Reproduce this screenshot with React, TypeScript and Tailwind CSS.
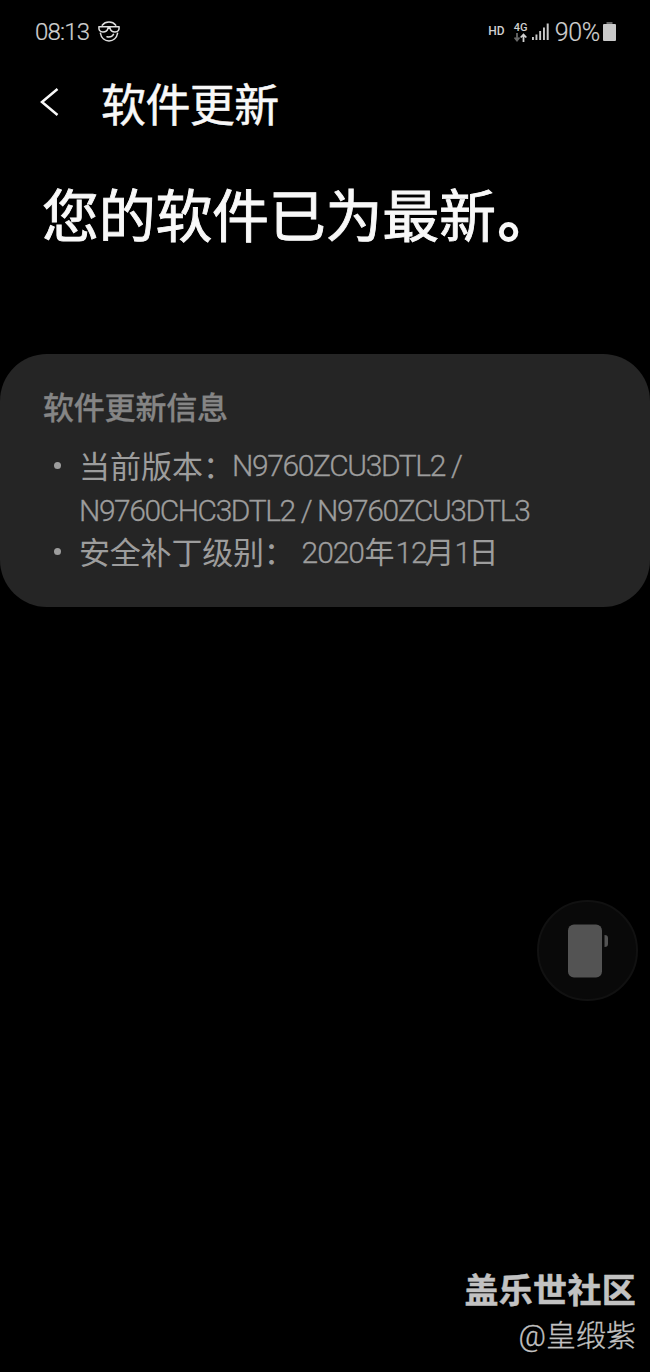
import type { ReactNode } from "react";

function Row({ children, bullet }: { children: ReactNode; bullet: string }) {
  return (
    <li className="flex">
      <span className={`mr-[18px] size-[7px] shrink-0 rounded-full bg-[#9d9d9d] ${bullet}`} />
      <div>{children}</div>
    </li>
  );
}

function CoolFace() {
  return (
    <svg width="22" height="22" viewBox="0 0 22 22" fill="none" stroke="#e0e0e0" strokeWidth="1.5" strokeLinecap="round">
      <path d="M4.2 4.2C7.500 0 14.500 0 17.800 4.200" />
      <path d="M2.400 12.200C4 22.500 18 22.500 19.600 12.200" />
      <path d="M1 5.800H21C21.500 9 20 11 17 11C13.800 11 12.500 9 12 7.200H10C9.500 9 8.200 11 5 11C2 11 0.500 9 1 5.800Z" />
      <path d="M9 15.800C12 16.300 14.500 15.200 15.500 13.300" />
    </svg>
  );
}

function Signal() {
  return (
    <svg width="17" height="18" viewBox="0 0 17 18" fill="#c9c9c9">
      <rect x="0" y="14" width="1.900" height="3" />
      <rect x="3.500" y="11.500" width="1.900" height="5.500" />
      <rect x="7.200" y="8" width="1.900" height="9" />
      <rect x="11" y="4.500" width="1.900" height="12.500" />
      <rect x="14.700" y="0.500" width="2" height="16.500" />
    </svg>
  );
}

export default function App() {
  return (
    <main className="flex h-[1372px] w-[650px] flex-col overflow-hidden bg-black font-['Roboto','Noto_Sans_CJK_SC',sans-serif] text-[#f8f8f8]">
      <header className="flex h-[64px] shrink-0 items-center pl-[35px] pr-[34px] text-[#d0d0d0]">
        <span className="mr-[9px] text-[24px] font-light leading-[24px] tracking-[-0.8px] [-webkit-text-stroke:0.2px]">08:13</span>
        <CoolFace />
        <span className="ml-auto mr-[9px] mt-[-2px] text-[12px] font-medium leading-[14px]">HD</span>
        <div className="mr-[4px] flex w-[14px] flex-col items-center">
          <span className="text-[11px] font-medium leading-[10px]">4G</span>
          <svg width="13" height="9" viewBox="0 0 13 9" fill="none" strokeWidth="1.800">
            <path d="M3 0V7M.5 4.500 3 7.500 5.500 4.500" stroke="#686868" />
            <path d="M9.500 9V2M6.700 4.500 9.500 1.500 12.300 4.500" stroke="#d0d0d0" />
          </svg>
        </div>
        <Signal />
        <span className="ml-[6px] text-[25px] font-light leading-[25px] tracking-[-0.300px] [-webkit-text-stroke:0.2px]">90%</span>
        <svg className="-mt-[2px] ml-[3px]" width="13" height="19" viewBox="0 0 13 19">
          <rect x="3.500" width="6" height="3" fill="#686868" />
          <rect y="2" width="13" height="17" rx="1" fill="#c9c9c9" />
        </svg>
      </header>

      <div className="flex h-[80px] shrink-0 items-center pl-[40px]">
        <svg className="-mt-[5px]" width="19" height="28" viewBox="0 0 19 28" fill="none" stroke="#f8f8f8" strokeWidth="2.500">
          <path d="M17.500 1 2 14 17.500 27" />
        </svg>
        <h1 className="ml-[42px] mt-[5px] text-[45px] font-normal leading-[60px] tracking-[-0.600px] [-webkit-text-stroke:0.5px]">软件更新</h1>
      </div>

      <h2 className="h-[210px] shrink-0 pl-[42px] pt-[34px] text-[57px] font-normal leading-[80px] tracking-[-0.300px] [-webkit-text-stroke:0.9px]">
        您的软件已为最新<span className="ml-[2px] [-webkit-text-stroke:2px]">。</span>
      </h2>

      <section className="h-[253px] shrink-0 rounded-[47px] bg-[#252525] pl-[43px] pt-[33px] text-[#9d9d9d]">
        <h3 className="text-[31px] font-medium leading-[44px] tracking-[-0.200px] text-[#858585] [-webkit-text-stroke:0.3px]">软件更新信息</h3>
        <ul className="mt-[12px] pl-[11px] text-[31px] font-light leading-[45px]">
          <Row bullet="mt-[19px]">
            <p className="flex h-[45px] whitespace-pre">
              <span className="mt-[2px] w-[153px] font-normal">当前版本：</span>
              <span className="text-[30px] tracking-[-1.380px] [-webkit-text-stroke:0.3px]">N9760ZCU3DTL2 /</span>
            </p>
            <p className="text-[30px] tracking-[-1.430px] [-webkit-text-stroke:0.3px]">N9760CHC3DTL2 / N9760ZCU3DTL3</p>
          </Row>
          <Row bullet="mt-[15px]">
            <p className="-mt-[2px] flex whitespace-pre font-normal tracking-[-0.200px]">
              <span>安全补丁级别：</span>
              <span className="-mt-px ml-[7px] flex text-[30px] [-webkit-text-stroke:0.3px]">
                <span className="w-[63px] font-light tracking-[-1.100px]">2020</span>
                <span className="w-[31px] [-webkit-text-stroke:0]">年</span>
                <span className="w-[29px] font-light tracking-[-1.300px]">12</span>
                <span className="w-[30px] [-webkit-text-stroke:0]">月</span>
                <span className="w-[14px] font-light tracking-[-1.300px]">1</span>
                <span className="[-webkit-text-stroke:0]">日</span>
              </span>
            </p>
          </Row>
        </ul>
      </section>

      <button className="ml-auto mr-[12px] mt-[293px] flex size-[101px] shrink-0 items-center justify-center rounded-full border-2 border-[#111] bg-[#090909]" aria-label="手机">
        <svg width="41" height="54" viewBox="0 0 41 54" fill="#535353">
          <rect x="1" y="0.500" width="34" height="53" rx="6" />
          <path d="M37.500 11C40 11 41 12 41 14V20C41 22 40 23 37.500 23Z" />
        </svg>
      </button>

      <footer className="mt-auto flex shrink-0 flex-col items-end pb-[14px] pr-[14px] text-[#c2c2c2]">
        <strong className="text-[34px] font-bold leading-[46px] tracking-[0.300px] [-webkit-text-stroke:0.5px]">盖乐世社区</strong>
        <span className="text-[30px] font-light leading-[44px] [-webkit-text-stroke:0.3px]">@皇缎紫</span>
      </footer>
    </main>
  );
}
